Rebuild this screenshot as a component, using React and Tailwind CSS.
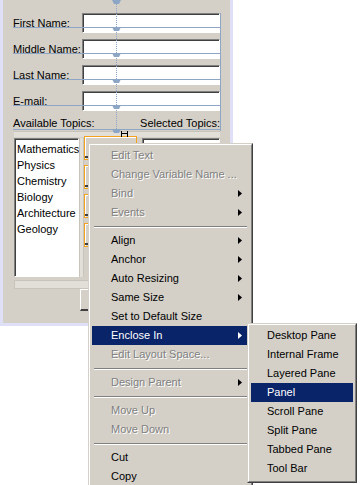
import React from "react";

const FONT = { fontFamily: '"Liberation Sans", Arial, sans-serif' };

const fields = ["First Name:", "Middle Name:", "Last Name:", "E-mail:"];
const topics = ["Mathematics", "Physics", "Chemistry", "Biology", "Architecture", "Geology"];

const menu = [
  { label: "Edit Text", disabled: true },
  { label: "Change Variable Name ...", disabled: true },
  { label: "Bind", disabled: true, sub: true },
  { label: "Events", disabled: true, sub: true },
  { sep: true },
  { label: "Align", sub: true },
  { label: "Anchor", sub: true },
  { label: "Auto Resizing", sub: true },
  { label: "Same Size", sub: true },
  { label: "Set to Default Size" },
  { label: "Enclose In", sub: true, active: true },
  { label: "Edit Layout Space...", disabled: true },
  { sep: true },
  { label: "Design Parent", disabled: true, sub: true },
  { sep: true },
  { label: "Move Up", disabled: true },
  { label: "Move Down", disabled: true },
  { sep: true },
  { label: "Cut" },
  { label: "Copy" },
];

const enclose = ["Desktop Pane", "Internal Frame", "Layered Pane", "Panel", "Scroll Pane", "Split Pane", "Tabbed Pane", "Tool Bar"];

function Arrow({ light }) {
  return (
    <svg width="4" height="7" viewBox="0 0 4 7" className="absolute right-[7px] top-[6px]">
      <path d="M0 0 L4 3.5 L0 7 Z" fill={light ? "#fff" : "#000"} />
    </svg>
  );
}

function MenuItem({ item, indent = "pl-[19px]" }) {
  if (item.sep) {
    return (
      <div className="h-[9px] flex items-center px-[2px]">
        <div className="w-full h-[2px] border-t border-t-[#808080] border-b border-b-white" />
      </div>
    );
  }
  return (
    <div
      className={
        "relative h-[19px] leading-[19px] text-[11px] whitespace-nowrap " +
        indent +
        " " +
        (item.active ? "bg-[#0a246a] text-white" : item.disabled ? "text-[#808080] [text-shadow:1px_1px_0_#fff]" : "text-black")
      }
    >
      {item.label}
      {item.sub && <Arrow light={item.active} />}
    </div>
  );
}

function Sunken({ className, children }) {
  return (
    <div className={"bg-white border border-t-[#808080] border-l-[#808080] border-r-white border-b-white shadow-[inset_1px_1px_0_#404040] " + className}>
      {children}
    </div>
  );
}

function Marker({ top }) {
  return (
    <svg width="9" height="5" viewBox="0 0 9 5" className="absolute left-[109px]" style={{ top }}>
      <path d="M0 0 H9 L7 4 H2 Z" fill="#8ea6c6" />
    </svg>
  );
}

export default function App() {
  return (
    <div className="relative w-[360px] h-[485px] bg-white overflow-hidden" style={FONT}>
      {/* form in the designer */}
      <div className="w-[233px] bg-[#dfdff7] pl-[3px] pr-[3px] pb-[3px]">
        <div className="relative h-[323px] bg-[#d4d0c8] pt-[13px] pl-[10px] text-[11px] text-black">
          {fields.map((f) => (
            <div key={f} className="flex items-center h-[20px] mb-[6px]">
              <div className="w-[69px] whitespace-nowrap">{f}</div>
              <Sunken className="w-[138px] h-[20px]" />
            </div>
          ))}
          <div className="flex justify-between w-[207px] h-[12px] leading-[12px]">
            <span>Available Topics:</span>
            <span>Selected Topics:</span>
          </div>
          <div className="ml-px mt-[2px] w-[206px] h-[6px] bg-[#e2dfd9] border-t border-[#c8c4bc]" />

          <div className="flex ml-px mt-[-1px]">
            <Sunken className="mt-[2px] w-[65px] h-[139px] pl-[2px] pt-[2px]">
              {topics.map((t) => (
                <div key={t} className="h-[16px] leading-[16px] whitespace-nowrap">{t}</div>
              ))}
            </Sunken>
            <div className="mt-[2px] w-[5px] h-[139px] bg-[#e2dfd9] border-x border-[#c8c4bc]" />
            <div className="flex flex-col w-[53px]">
              {[0, 1, 2, 3].map((i) => (
                <div key={i} className="relative h-[24px] mb-[5px] border border-[#f4a21c] bg-[#d4d0c8]">
                  <div className="absolute left-0 top-0 w-full h-full border-l border-t border-white" />
                  <div className="absolute left-0 bottom-[1px] w-[5px] h-[2px] bg-[#404040]" />
                </div>
              ))}
            </div>
            <Sunken className="ml-[5px] mt-[2px] w-[78px] h-[139px] pl-[4px] pt-[2px]">
              <div className="h-[16px] leading-[16px]">Mathematics</div>
            </Sunken>
          </div>

          <div className="ml-px mt-[3px] w-[206px] h-[9px] bg-[#e2dfd9] border border-[#c8c4bc]" />
          <div className="ml-[67px] w-[70px] h-[22px] border-l border-t border-white border-b-2 border-b-[#404040]" />

          {/* layout guides */}
          <div className="absolute left-[113px] top-0 h-[131px] border-l border-dotted border-[#8ea6c6]" />
          {[0, 27, 53, 79, 105, 129].map((y) => (
            <Marker key={y} top={y} />
          ))}
          {[27, 53, 79, 105, 129].map((y) => (
            <div key={y} className="absolute left-[10px] w-[207px] h-px bg-[#8ea6c6]" style={{ top: y }} />
          ))}
          <div className="absolute left-[217px] top-[13px] w-px h-[118px] bg-[#8ea6c6]" />
          <svg width="7" height="6" viewBox="0 0 7 6" className="absolute left-[118px] top-[131px]">
            <path d="M0.5 0 V6 M6.5 0 V6 M0.5 2.5 H6.5" stroke="#000" strokeWidth="1" />
          </svg>
        </div>
      </div>

      {/* context menu */}
      <div className="absolute left-[88px] top-[143px] w-[165px] h-[360px] bg-[#d4d0c8] border border-t-[#d4d0c8] border-l-[#d4d0c8] border-r-[#404040] border-b-[#404040]">
        <div className="h-full border border-t-white border-l-white border-r-[#808080] border-b-[#808080] px-[2px] pt-[1px]">
          {menu.map((m, i) => (
            <MenuItem key={i} item={m} />
          ))}
        </div>
      </div>

      {/* Enclose In submenu */}
      <div className="absolute left-[247px] top-[323px] w-[110px] h-[160px] bg-[#d4d0c8] border border-t-[#d4d0c8] border-l-[#d4d0c8] border-r-[#404040] border-b-[#404040]">
        <div className="h-full border border-t-white border-l-white border-r-[#808080] border-b-[#808080] px-[2px] pt-[1px]">
          {enclose.map((e) => (
            <MenuItem key={e} indent="pl-[16px]" item={{ label: e, active: e === "Panel" }} />
          ))}
        </div>
      </div>
    </div>
  );
}
